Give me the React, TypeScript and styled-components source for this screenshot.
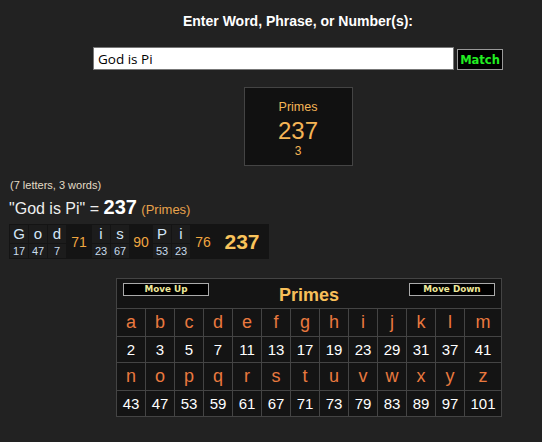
import React from "react";
import styled, { createGlobalStyle } from "styled-components";

const GlobalStyle = createGlobalStyle`
  html, body {
    margin: 0;
    background: #222;
    overflow: hidden;
  }
  body {
    font-family: "Liberation Sans", Arial, sans-serif;
    color: #fff;
  }
`;

const Page = styled.div`
  padding-top: 13px;
`;

const Center = styled.div`
  margin-left: 54px;
  width: 488px;
  display: flex;
  flex-direction: column;
  align-items: center;
`;

const Title = styled.div`
  font-weight: bold;
  font-size: 14px;
  line-height: 16px;
  color: #fff;
`;

const InputRow = styled.div`
  margin-top: 18px;
  display: flex;
  align-items: flex-end;
  gap: 3px;
`;

const WordInput = styled.input`
  box-sizing: border-box;
  width: 361px;
  height: 23px;
  border: 1px solid #777;
  background: #fff;
  color: #000;
  padding: 0 4px;
  font-family: "Open Sans", sans-serif;
  font-size: 13.5px;
  outline: none;
`;

const MatchButton = styled.button`
  box-sizing: border-box;
  width: 46px;
  height: 21px;
  padding: 0;
  background: #000;
  border: 1px solid #999;
  color: #22ee22;
  font-family: "DejaVu Sans", Verdana, sans-serif;
  font-weight: bold;
  font-size: 11.5px;
`;

const CipherBox = styled.div`
  box-sizing: border-box;
  margin-top: 17px;
  width: 109px;
  height: 79px;
  background: #111;
  border: 1px solid #444;
  display: flex;
  flex-direction: column;
  align-items: center;
  color: #f5b556;
  padding-top: 12px;
`;

const BoxLabel = styled.div`
  font-size: 12.5px;
  line-height: 15px;
`;

const BoxValue = styled.div`
  font-size: 24px;
  line-height: 26px;
  margin-top: 3px;
`;

const BoxWords = styled.div`
  font-size: 12px;
  line-height: 14px;
`;

const Info = styled.div`
  margin: 13px 0 0 10px;
  font-size: 11px;
  line-height: 13px;
  color: #e2dcc6;
`;

const Equation = styled.div`
  margin: 5px 0 0 9px;
  font-size: 16px;
  line-height: 20px;
  color: #eee;
`;

const EqTotal = styled.span`
  font-weight: bold;
  font-size: 20px;
  color: #fff;
`;

const EqCipher = styled.span`
  font-size: 13px;
  color: #e9a34c;
`;

const Breakdown = styled.div`
  margin: 4px 0 0 9px;
  display: flex;
  width: fit-content;
  background: #141414;
  padding: 1px;
  gap: 1px;
`;

const LetterCol = styled.div`
  width: 18px;
  display: flex;
  flex-direction: column;
  gap: 1px;
`;

const LetterTop = styled.div`
  height: 18px;
  background: #1c1c1c;
  color: #d3e6f7;
  font-size: 15px;
  line-height: 18px;
  text-align: center;
`;

const LetterNum = styled.div`
  height: 14px;
  background: #1c1c1c;
  color: #c9dcee;
  font-size: 11px;
  line-height: 15px;
  text-align: center;
`;

const WordSum = styled.div<{ $w: number }>`
  width: ${(p) => p.$w}px;
  display: flex;
  align-items: center;
  justify-content: center;
  color: #f0a640;
  font-size: 14px;
`;

const GrandSum = styled.div`
  width: 52px;
  display: flex;
  align-items: center;
  justify-content: center;
  color: #f9c35b;
  font-size: 21px;
  font-weight: bold;
`;

const ChartWrap = styled.div`
  margin: 19px 0 0 116px;
`;

const Chart = styled.div`
  display: inline-grid;
  grid-template-columns: repeat(12, 28px) 36px;
  grid-template-rows: 29px 27px 25px 27px 25px;
  gap: 1px;
  padding: 1px;
  background: #444;
`;

const ChartHead = styled.div`
  grid-column: 1 / -1;
  background: #141414;
  display: flex;
  justify-content: space-between;
  align-items: flex-start;
  padding: 4px 6px 0;
`;

const MoveButton = styled.button`
  box-sizing: border-box;
  width: 86px;
  height: 13px;
  padding: 0;
  background: #000;
  border: 1px solid #aaa;
  color: #eee89a;
  font-family: "DejaVu Sans", Verdana, sans-serif;
  font-weight: bold;
  font-size: 8.8px;
  line-height: 11px;
`;

const ChartTitle = styled.div`
  font-size: 18px;
  font-weight: bold;
  color: #f7bf5a;
  line-height: 18px;
  margin-top: 3px;
`;

const Cell = styled.div<{ $letter?: boolean }>`
  background: #141414;
  display: flex;
  align-items: center;
  justify-content: center;
  color: ${(p) => (p.$letter ? "#e9793f" : "#fff")};
  font-size: ${(p) => (p.$letter ? "18px" : "15px")};
`;

const letters = "abcdefghijklmnopqrstuvwxyz".split("");
const primes = [
  2, 3, 5, 7, 11, 13, 17, 19, 23, 29, 31, 37, 41, 43, 47, 53, 59, 61, 67, 71,
  73, 79, 83, 89, 97, 101,
];

const words = [
  { chars: [["G", 17], ["o", 47], ["d", 7]], sum: 71, w: 24 },
  { chars: [["i", 23], ["s", 67]], sum: 90, w: 22 },
  { chars: [["P", 53], ["i", 23]], sum: 76, w: 24 },
];

export default function App() {
  const halves = [letters.slice(0, 13), letters.slice(13)];
  return (
    <Page>
      <GlobalStyle />
      <Center>
        <Title>Enter Word, Phrase, or Number(s):</Title>
        <InputRow>
          <WordInput defaultValue="God is Pi" />
          <MatchButton>Match</MatchButton>
        </InputRow>
        <CipherBox>
          <BoxLabel>Primes</BoxLabel>
          <BoxValue>237</BoxValue>
          <BoxWords>3</BoxWords>
        </CipherBox>
      </Center>

      <Info>(7 letters, 3 words)</Info>
      <Equation>
        "God is Pi" = <EqTotal>237</EqTotal> <EqCipher>(Primes)</EqCipher>
      </Equation>
      <Breakdown>
        {words.map((word, i) => (
          <React.Fragment key={i}>
            {word.chars.map(([c, n], j) => (
              <LetterCol key={j}>
                <LetterTop>{c}</LetterTop>
                <LetterNum>{n}</LetterNum>
              </LetterCol>
            ))}
            <WordSum $w={word.w}>{word.sum}</WordSum>
          </React.Fragment>
        ))}
        <GrandSum>237</GrandSum>
      </Breakdown>

      <ChartWrap>
        <Chart>
          <ChartHead>
            <MoveButton>Move Up</MoveButton>
            <ChartTitle>Primes</ChartTitle>
            <MoveButton>Move Down</MoveButton>
          </ChartHead>
          {halves.map((row, r) => (
            <React.Fragment key={r}>
              {row.map((l) => (
                <Cell $letter key={l}>
                  {l}
                </Cell>
              ))}
              {row.map((l, i) => (
                <Cell key={l + "n"}>{primes[r * 13 + i]}</Cell>
              ))}
            </React.Fragment>
          ))}
        </Chart>
      </ChartWrap>
    </Page>
  );
}
